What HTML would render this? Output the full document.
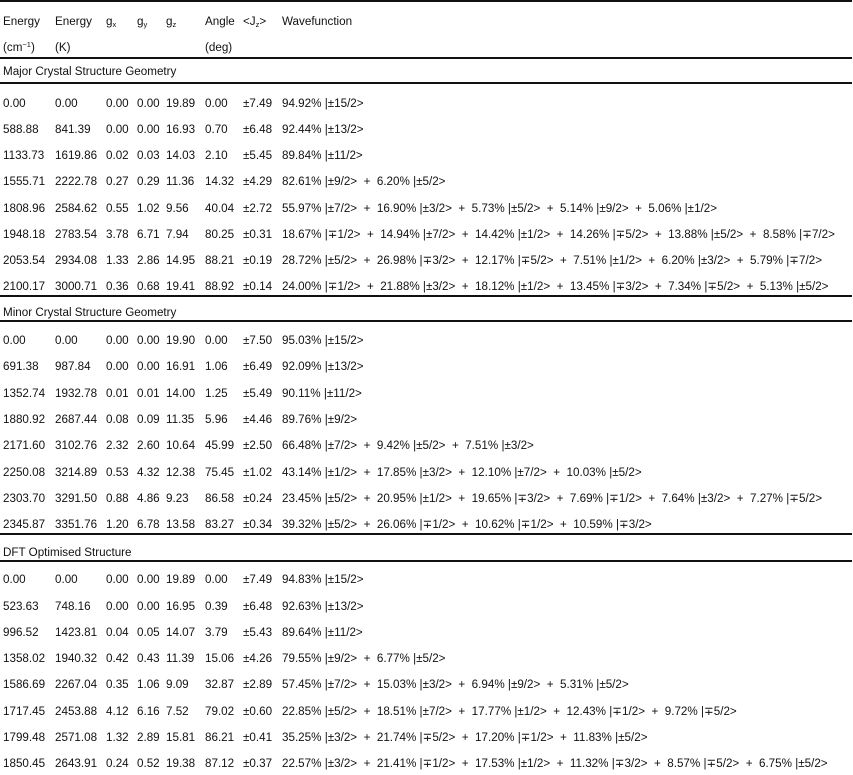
<!DOCTYPE html>
<html><head><meta charset="utf-8">
<style>
html,body{margin:0;padding:0;background:#fff;}
body{width:853px;height:775px;position:relative;overflow:hidden;font-family:"Liberation Sans",Arial,sans-serif;font-size:11.65px;color:#111;}
.r{position:absolute;left:0;height:14px;line-height:14px;width:853px;white-space:pre;}
.r span{position:absolute;top:0;}
.a{left:3px}.b{left:55px}.c{left:106px}.d{left:137px}.e{left:166px}.f{left:205px}.g{left:243px}.h{left:282px}
.t{position:absolute;left:3px;height:14px;line-height:14px;}
.l{position:absolute;left:0;width:852px;height:2px;background:#111;}
sub{font-size:7.5px;vertical-align:-2px;line-height:0}
sup{font-size:7.5px;vertical-align:4px;line-height:0}
</style></head><body>
<div class="l" style="top:0px"></div>
<div class="r" style="top:15px"><span class="a">Energy</span><span class="b">Energy</span><span class="c">g<sub>x</sub></span><span class="d">g<sub>y</sub></span><span class="e">g<sub>z</sub></span><span class="f">Angle</span><span class="g">&lt;J<sub>z</sub>&gt;</span><span class="h">Wavefunction</span></div>
<div class="r" style="top:41px"><span class="a">(cm<sup>−1</sup>)</span><span class="b">(K)</span><span class="f">(deg)</span></div>
<div class="l" style="top:57px"></div>
<div class="t" style="top:65px">Major Crystal Structure Geometry</div>
<div class="l" style="top:82px"></div>

<div class="r" style="top:97px"><span class="a">0.00</span><span class="b">0.00</span><span class="c">0.00</span><span class="d">0.00</span><span class="e">19.89</span><span class="f">0.00</span><span class="g">±7.49</span><span class="h">94.92% |±15/2&gt;</span></div>
<div class="r" style="top:123px"><span class="a">588.88</span><span class="b">841.39</span><span class="c">0.00</span><span class="d">0.00</span><span class="e">16.93</span><span class="f">0.70</span><span class="g">±6.48</span><span class="h">92.44% |±13/2&gt;</span></div>
<div class="r" style="top:149px"><span class="a">1133.73</span><span class="b">1619.86</span><span class="c">0.02</span><span class="d">0.03</span><span class="e">14.03</span><span class="f">2.10</span><span class="g">±5.45</span><span class="h">89.84% |±11/2&gt;</span></div>
<div class="r" style="top:175px"><span class="a">1555.71</span><span class="b">2222.78</span><span class="c">0.27</span><span class="d">0.29</span><span class="e">11.36</span><span class="f">14.32</span><span class="g">±4.29</span><span class="h">82.61% |±9/2&gt;  +  6.20% |±5/2&gt;</span></div>
<div class="r" style="top:202px"><span class="a">1808.96</span><span class="b">2584.62</span><span class="c">0.55</span><span class="d">1.02</span><span class="e">9.56</span><span class="f">40.04</span><span class="g">±2.72</span><span class="h">55.97% |±7/2&gt;  +  16.90% |±3/2&gt;  +  5.73% |±5/2&gt;  +  5.14% |±9/2&gt;  +  5.06% |±1/2&gt;</span></div>
<div class="r" style="top:228px"><span class="a">1948.18</span><span class="b">2783.54</span><span class="c">3.78</span><span class="d">6.71</span><span class="e">7.94</span><span class="f">80.25</span><span class="g">±0.31</span><span class="h">18.67% |∓1/2&gt;  +  14.94% |±7/2&gt;  +  14.42% |±1/2&gt;  +  14.26% |∓5/2&gt;  +  13.88% |±5/2&gt;  +  8.58% |∓7/2&gt;</span></div>
<div class="r" style="top:254px"><span class="a">2053.54</span><span class="b">2934.08</span><span class="c">1.33</span><span class="d">2.86</span><span class="e">14.95</span><span class="f">88.21</span><span class="g">±0.19</span><span class="h">28.72% |±5/2&gt;  +  26.98% |∓3/2&gt;  +  12.17% |∓5/2&gt;  +  7.51% |±1/2&gt;  +  6.20% |±3/2&gt;  +  5.79% |∓7/2&gt;</span></div>
<div class="r" style="top:280px"><span class="a">2100.17</span><span class="b">3000.71</span><span class="c">0.36</span><span class="d">0.68</span><span class="e">19.41</span><span class="f">88.92</span><span class="g">±0.14</span><span class="h">24.00% |∓1/2&gt;  +  21.88% |±3/2&gt;  +  18.12% |±1/2&gt;  +  13.45% |∓3/2&gt;  +  7.34% |∓5/2&gt;  +  5.13% |±5/2&gt;</span></div>
<div class="l" style="top:295px"></div>
<div class="t" style="top:306px">Minor Crystal Structure Geometry</div>
<div class="l" style="top:320px"></div>

<div class="r" style="top:334px"><span class="a">0.00</span><span class="b">0.00</span><span class="c">0.00</span><span class="d">0.00</span><span class="e">19.90</span><span class="f">0.00</span><span class="g">±7.50</span><span class="h">95.03% |±15/2&gt;</span></div>
<div class="r" style="top:360px"><span class="a">691.38</span><span class="b">987.84</span><span class="c">0.00</span><span class="d">0.00</span><span class="e">16.91</span><span class="f">1.06</span><span class="g">±6.49</span><span class="h">92.09% |±13/2&gt;</span></div>
<div class="r" style="top:387px"><span class="a">1352.74</span><span class="b">1932.78</span><span class="c">0.01</span><span class="d">0.01</span><span class="e">14.00</span><span class="f">1.25</span><span class="g">±5.49</span><span class="h">90.11% |±11/2&gt;</span></div>
<div class="r" style="top:413px"><span class="a">1880.92</span><span class="b">2687.44</span><span class="c">0.08</span><span class="d">0.09</span><span class="e">11.35</span><span class="f">5.96</span><span class="g">±4.46</span><span class="h">89.76% |±9/2&gt;</span></div>
<div class="r" style="top:439px"><span class="a">2171.60</span><span class="b">3102.76</span><span class="c">2.32</span><span class="d">2.60</span><span class="e">10.64</span><span class="f">45.99</span><span class="g">±2.50</span><span class="h">66.48% |±7/2&gt;  +  9.42% |±5/2&gt;  +  7.51% |±3/2&gt;</span></div>
<div class="r" style="top:466px"><span class="a">2250.08</span><span class="b">3214.89</span><span class="c">0.53</span><span class="d">4.32</span><span class="e">12.38</span><span class="f">75.45</span><span class="g">±1.02</span><span class="h">43.14% |±1/2&gt;  +  17.85% |±3/2&gt;  +  12.10% |±7/2&gt;  +  10.03% |±5/2&gt;</span></div>
<div class="r" style="top:492px"><span class="a">2303.70</span><span class="b">3291.50</span><span class="c">0.88</span><span class="d">4.86</span><span class="e">9.23</span><span class="f">86.58</span><span class="g">±0.24</span><span class="h">23.45% |±5/2&gt;  +  20.95% |±1/2&gt;  +  19.65% |∓3/2&gt;  +  7.69% |∓1/2&gt;  +  7.64% |±3/2&gt;  +  7.27% |∓5/2&gt;</span></div>
<div class="r" style="top:518px"><span class="a">2345.87</span><span class="b">3351.76</span><span class="c">1.20</span><span class="d">6.78</span><span class="e">13.58</span><span class="f">83.27</span><span class="g">±0.34</span><span class="h">39.32% |±5/2&gt;  +  26.06% |∓1/2&gt;  +  10.62% |∓1/2&gt;  +  10.59% |∓3/2&gt;</span></div>
<div class="l" style="top:533px"></div>
<div class="t" style="top:546px">DFT Optimised Structure</div>
<div class="l" style="top:560px"></div>

<div class="r" style="top:573px"><span class="a">0.00</span><span class="b">0.00</span><span class="c">0.00</span><span class="d">0.00</span><span class="e">19.89</span><span class="f">0.00</span><span class="g">±7.49</span><span class="h">94.83% |±15/2&gt;</span></div>
<div class="r" style="top:600px"><span class="a">523.63</span><span class="b">748.16</span><span class="c">0.00</span><span class="d">0.00</span><span class="e">16.95</span><span class="f">0.39</span><span class="g">±6.48</span><span class="h">92.63% |±13/2&gt;</span></div>
<div class="r" style="top:626px"><span class="a">996.52</span><span class="b">1423.81</span><span class="c">0.04</span><span class="d">0.05</span><span class="e">14.07</span><span class="f">3.79</span><span class="g">±5.43</span><span class="h">89.64% |±11/2&gt;</span></div>
<div class="r" style="top:652px"><span class="a">1358.02</span><span class="b">1940.32</span><span class="c">0.42</span><span class="d">0.43</span><span class="e">11.39</span><span class="f">15.06</span><span class="g">±4.26</span><span class="h">79.55% |±9/2&gt;  +  6.77% |±5/2&gt;</span></div>
<div class="r" style="top:678px"><span class="a">1586.69</span><span class="b">2267.04</span><span class="c">0.35</span><span class="d">1.06</span><span class="e">9.09</span><span class="f">32.87</span><span class="g">±2.89</span><span class="h">57.45% |±7/2&gt;  +  15.03% |±3/2&gt;  +  6.94% |±9/2&gt;  +  5.31% |±5/2&gt;</span></div>
<div class="r" style="top:705px"><span class="a">1717.45</span><span class="b">2453.88</span><span class="c">4.12</span><span class="d">6.16</span><span class="e">7.52</span><span class="f">79.02</span><span class="g">±0.60</span><span class="h">22.85% |±5/2&gt;  +  18.51% |±7/2&gt;  +  17.77% |±1/2&gt;  +  12.43% |∓1/2&gt;  +  9.72% |∓5/2&gt;</span></div>
<div class="r" style="top:731px"><span class="a">1799.48</span><span class="b">2571.08</span><span class="c">1.32</span><span class="d">2.89</span><span class="e">15.81</span><span class="f">86.21</span><span class="g">±0.41</span><span class="h">35.25% |±3/2&gt;  +  21.74% |∓5/2&gt;  +  17.20% |∓1/2&gt;  +  11.83% |±5/2&gt;</span></div>
<div class="r" style="top:757px"><span class="a">1850.45</span><span class="b">2643.91</span><span class="c">0.24</span><span class="d">0.52</span><span class="e">19.38</span><span class="f">87.12</span><span class="g">±0.37</span><span class="h">22.57% |±3/2&gt;  +  21.41% |∓1/2&gt;  +  17.53% |±1/2&gt;  +  11.32% |∓3/2&gt;  +  8.57% |∓5/2&gt;  +  6.75% |±5/2&gt;</span></div>
</body></html>
